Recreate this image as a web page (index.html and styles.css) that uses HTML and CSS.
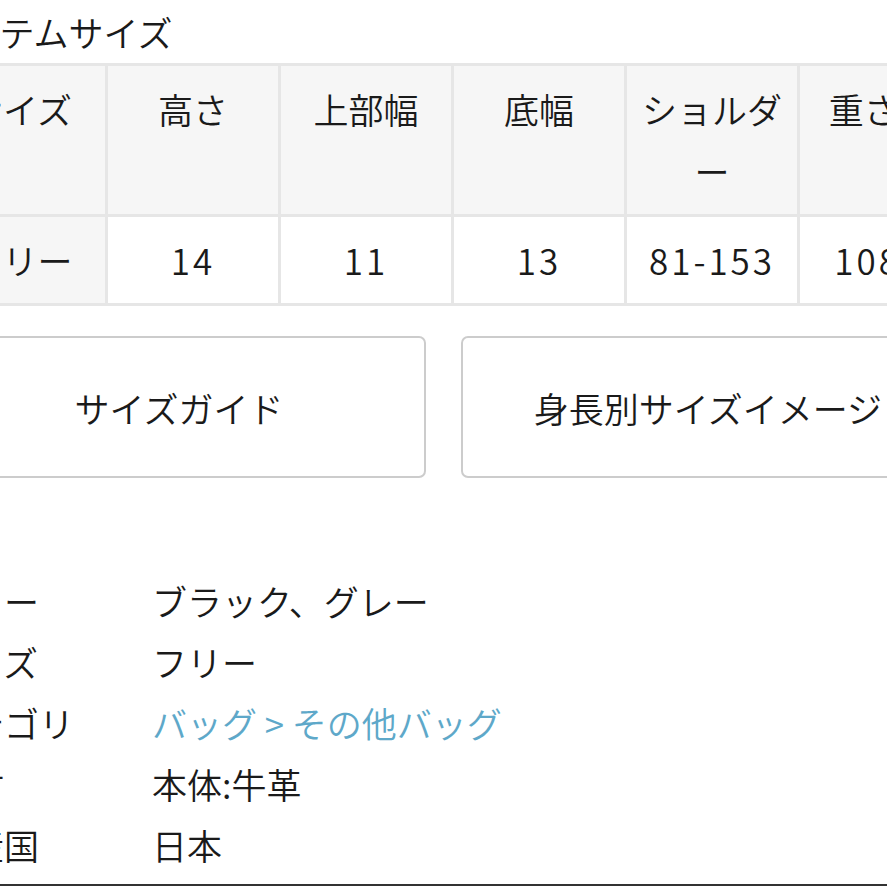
FILE: index.html
```html
<!DOCTYPE html>
<html lang="ja">
<head>
<meta charset="utf-8">
<link rel="stylesheet" href="styles.css">
</head>
<body>
<div class="page">
  <h2 class="title">アイテムサイズ</h2>
  <table class="sizes">
    <colgroup>
      <col class="c"><col class="c"><col class="c"><col class="c"><col class="c"><col class="c">
    </colgroup>
    <thead>
      <tr>
        <th>サイズ</th>
        <th>高さ</th>
        <th>上部幅</th>
        <th>底幅</th>
        <th>ショルダー</th>
        <th>重さ(g)</th>
      </tr>
    </thead>
    <tbody>
      <tr>
        <td class="rowhead">フリー</td>
        <td class="num">14</td>
        <td class="num">11</td>
        <td class="num">13</td>
        <td class="num">81-153</td>
        <td class="num">108.5</td>
      </tr>
    </tbody>
  </table>

  <div class="buttons">
    <a class="btn">サイズガイド</a>
    <a class="btn">身長別サイズイメージ</a>
  </div>

  <dl class="info">
    <dt>カラー</dt><dd>ブラック、グレー</dd>
    <dt>サイズ</dt><dd>フリー</dd>
    <dt>カテゴリ</dt><dd><a class="link">バッグ &gt; その他バッグ</a></dd>
    <dt>素材</dt><dd>本体:牛革</dd>
    <dt>原産国</dt><dd>日本</dd>
  </dl>
  <div class="rule"></div>
</div>
</body>
</html>
```

FILE: styles.css
```css
html, body {
  margin: 0;
  padding: 0;
  background: #ffffff;
  overflow: hidden;
}
body {
  font-family: "Noto Sans CJK JP", "Noto Sans", sans-serif;
  font-weight: 350;
  color: #1a1a1a;
  font-size: 35px;
}
.page {
  margin-left: -68px;
  width: 1040px;
}
.title {
  margin: 7px 0 6px 0;
  font-size: 35px;
  font-weight: 350;
  line-height: 50px;
}
.sizes {
  border-collapse: collapse;
  table-layout: fixed;
  width: 1038px;
}
.sizes .c {
  width: 173px;
}
.sizes th,
.sizes td {
  border: 3px solid #e6e6e6;
  padding: 12px 12px;
  line-height: 62px;
  text-align: center;
  vertical-align: top;
  font-weight: 350;
  font-size: 35px;
}
.sizes th {
  background: #f6f6f6;
}
.sizes td {
  background: #ffffff;
}
.sizes td.rowhead {
  background: #f6f6f6;
}
.sizes td.num {
  letter-spacing: 3px;
}
.buttons {
  display: flex;
  gap: 35px;
  margin-top: 30px;
}
.btn {
  box-sizing: border-box;
  width: 494px;
  height: 142px;
  border: 2px solid #cccccc;
  border-radius: 7px;
  display: flex;
  align-items: center;
  justify-content: center;
  font-size: 35px;
  color: #1a1a1a;
  background: #fff;
}
.info {
  display: grid;
  grid-template-columns: 220px 1fr;
  margin: 92px 0 0 0;
  line-height: 61px;
}
.info dt {
  padding-left: 2px;
  margin: 0;
}
.info dd {
  margin: 0;
}
.link {
  color: #5ea8c9;
}
.rule {
  margin-top: 9px;
  height: 2px;
  background: #333333;
}
```
